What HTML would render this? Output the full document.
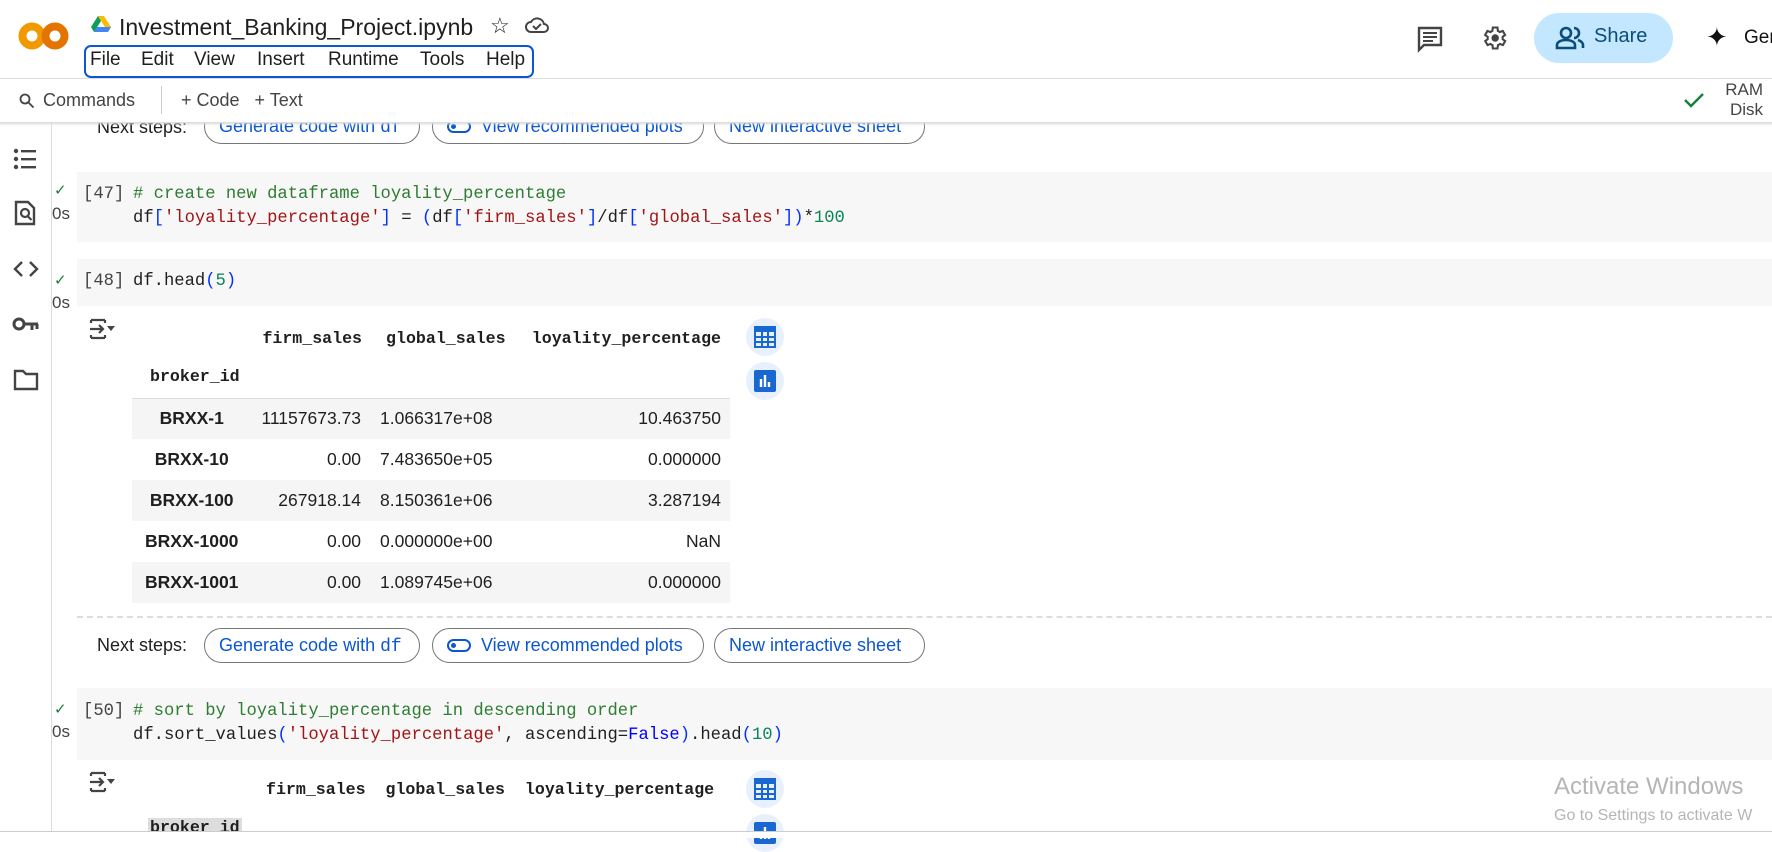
<!DOCTYPE html>
<html><head><meta charset="utf-8">
<style>
*{margin:0;padding:0;box-sizing:border-box}
body{width:1772px;height:838px;overflow:hidden;background:#fff;font-family:"Liberation Sans",sans-serif;position:relative;color:#1f1f1f}
.a{position:absolute;white-space:nowrap}
.mono{font-family:"Liberation Mono",monospace}
.cell{position:absolute;left:77px;right:0;background:#f7f7f7}
.code{font-family:"Liberation Mono",monospace;font-size:17.2px;color:#1f1f1f}
.cm{color:#2e7d32}.st{color:#a31515}.br{color:#0431fa}.nu{color:#098658}.kw{color:#0000ff}
.btn{position:absolute;height:35px;border:1px solid #747775;border-radius:18px;color:#0b57d0;font-size:18px;line-height:33px;padding:0 14px;white-space:nowrap}
th{font-family:"Liberation Mono",monospace;font-weight:bold;font-size:16.6px}
.tb td{font-size:17.5px;height:41px;text-align:right;padding-right:9px}
.tb td.h{font-weight:bold;text-align:center;padding:0 8px}
.ico{position:absolute;width:38px;height:38px;border-radius:50%;background:#e8f0fe}
.mi{position:absolute;top:49px;font-size:19px;color:#1f1f1f}
</style></head><body>

<!-- header -->
<svg class="a" style="left:18px;top:21px" width="52" height="30" viewBox="0 0 52 30">
<circle cx="14" cy="15" r="9.5" fill="none" stroke="#f29900" stroke-width="8"/>
<circle cx="37" cy="15" r="9.5" fill="none" stroke="#e37400" stroke-width="8"/>
</svg>
<svg class="a" style="left:91px;top:16px" width="20" height="17" viewBox="0 0 20 17">
<polygon points="7,0 13,0 20,11 17,16" fill="#fbbc04"/><polygon points="7,0 0,11 3,16 10,5" fill="#0f9d58"/><polygon points="3,16 17,16 20,11 6,11" fill="#4285f4"/>
</svg>
<div class="a" style="left:119px;top:14px;font-size:23px;color:#1f1f1f">Investment_Banking_Project.ipynb</div>
<div class="a" style="left:490px;top:13px;font-size:22px">☆</div>
<svg class="a" style="left:525px;top:15px" width="24" height="20" viewBox="0 0 24 20"><path d="M6 17h13a4 4 0 0 0 0-8 7 7 0 0 0-13-2 5 5 0 0 0 0 10z" fill="none" stroke="#444" stroke-width="2"/><path d="M8 11l3 3 5-5" fill="none" stroke="#444" stroke-width="2"/></svg>
<div class="a" style="left:84px;top:45px;width:450px;height:33px;border:2px solid #0b57d0;border-radius:7px"></div>
<div class="mi" style="left:90px">File</div>
<div class="mi" style="left:141px">Edit</div>
<div class="mi" style="left:194px">View</div>
<div class="mi" style="left:257px">Insert</div>
<div class="mi" style="left:328px">Runtime</div>
<div class="mi" style="left:420px">Tools</div>
<div class="mi" style="left:486px">Help</div>

<svg class="a" style="left:1416px;top:25px" width="28" height="28" viewBox="0 0 28 28"><path d="M3 3h22v17H8l-5 5z" fill="none" stroke="#444" stroke-width="2.4"/><path d="M7 8h14M7 12h14M7 16h10" stroke="#444" stroke-width="2"/></svg>
<svg class="a" style="left:1480px;top:24px" width="28" height="28" viewBox="0 0 24 24"><path fill="none" stroke="#444" stroke-width="1.8" d="M19.4 13a7 7 0 0 0 0-2l2.1-1.6-2-3.5-2.5 1a7 7 0 0 0-1.7-1L15 3h-4l-.4 2.9a7 7 0 0 0-1.7 1l-2.5-1-2 3.5L6.6 11a7 7 0 0 0 0 2l-2.1 1.6 2 3.5 2.5-1a7 7 0 0 0 1.7 1L11 21h4l.4-2.9a7 7 0 0 0 1.7-1l2.5 1 2-3.5z"/><circle cx="13" cy="12" r="3.2" fill="#444"/></svg>
<div class="a" style="left:1534px;top:13px;width:139px;height:50px;border-radius:25px;background:#c2e7ff"></div>
<svg class="a" style="left:1555px;top:25px" width="30" height="26" viewBox="0 0 30 26"><circle cx="11" cy="8" r="5" fill="none" stroke="#0b4c7a" stroke-width="2.6"/><path d="M2 23v-3c0-3 4-5 9-5s9 2 9 5v3z" fill="none" stroke="#0b4c7a" stroke-width="2.6"/><path d="M19 3a5 5 0 0 1 0 10M23 15c3 1 5 3 5 5v3" fill="none" stroke="#0b4c7a" stroke-width="2.6"/></svg>
<div class="a" style="left:1594px;top:25px;font-size:20px;color:#0b4c7a">Share</div>
<div class="a" style="left:1706px;top:22px;font-size:26px;color:#111">✦</div>
<div class="a" style="left:1744px;top:27px;font-size:19px;color:#111">Gem</div>

<div class="a" style="left:0;top:78px;width:1772px;height:1px;background:#dadce0"></div>

<div class="a" style="left:51px;top:123px;width:1px;height:715px;background:#dadce0"></div>

<!-- sidebar icons -->
<svg class="a" style="left:13px;top:148px" width="24" height="22" viewBox="0 0 24 22"><g fill="#444"><circle cx="3" cy="3" r="2.2"/><circle cx="3" cy="11" r="2.2"/><circle cx="3" cy="19" r="2.2"/><rect x="8" y="2" width="15" height="2.4"/><rect x="8" y="10" width="15" height="2.4"/><rect x="8" y="18" width="15" height="2.4"/></g></svg>
<svg class="a" style="left:14px;top:200px" width="22" height="26" viewBox="0 0 22 26"><path d="M2 2h12l6 6v16H2z" fill="none" stroke="#444" stroke-width="2.4"/><circle cx="11" cy="13" r="4" fill="none" stroke="#444" stroke-width="2.2"/><path d="M13.5 16l4 4" stroke="#444" stroke-width="2.2"/></svg>
<svg class="a" style="left:13px;top:260px" width="26" height="18" viewBox="0 0 26 18"><path d="M9 2L2 9l7 7M17 2l7 7-7 7" fill="none" stroke="#444" stroke-width="2.4"/></svg>
<svg class="a" style="left:12px;top:315px" width="28" height="18" viewBox="0 0 28 18"><circle cx="7" cy="9" r="5" fill="none" stroke="#444" stroke-width="3"/><path d="M12 9h14M20 9v6M25 9v5" stroke="#444" stroke-width="3"/></svg>
<svg class="a" style="left:13px;top:369px" width="26" height="22" viewBox="0 0 26 22"><path d="M2 2h8l3 3h11v15H2z" fill="none" stroke="#444" stroke-width="2.4"/></svg>

<!-- first next steps (partially hidden) -->
<div class="a" style="left:97px;top:117px;font-size:18px">Next steps:</div>
<div class="btn" style="left:204px;top:109px;width:216px">Generate code with <span class="mono">df</span></div>
<div class="btn" style="left:432px;top:109px;width:272px"><span style="display:inline-block;width:24px;height:13px;border:2.5px solid #0b57d0;border-radius:7px;vertical-align:-1px;margin-right:10px;position:relative"><span style="position:absolute;left:2px;top:2px;width:5px;height:5px;background:#0b57d0;border-radius:50%"></span></span>View recommended plots</div>
<div class="btn" style="left:714px;top:109px;width:211px">New interactive sheet</div>
<!-- toolbar overlay -->
<div class="a" style="left:0;top:79px;width:1772px;height:44px;background:#fff"></div>
<svg class="a" style="left:19px;top:93px" width="16" height="16" viewBox="0 0 16 16"><circle cx="6" cy="6" r="4.5" fill="none" stroke="#444" stroke-width="1.8"/><path d="M9.5 9.5l5 5" stroke="#444" stroke-width="1.8"/></svg>
<div class="a" style="left:43px;top:90px;font-size:18px;color:#444">Commands</div>
<div class="a" style="left:161px;top:86px;width:1px;height:28px;background:#ccc"></div>
<div class="a" style="left:181px;top:90px;font-size:18px;color:#444">+ Code&nbsp;&nbsp; + Text</div>
<svg class="a" style="left:1683px;top:91px" width="22" height="18" viewBox="0 0 22 18"><path d="M2 9l6 6L20 3" fill="none" stroke="#188038" stroke-width="2.4"/></svg>
<div class="a" style="left:1723px;top:80px;font-size:17px;color:#444;line-height:20px;text-align:right;width:40px">RAM<br>Disk</div>
<div class="a" style="left:0;top:122px;width:1772px;height:4px;background:linear-gradient(#d8d8d8,#fff0)"></div>

<!-- cell 47 -->
<div class="cell" style="top:172px;height:70px"></div>
<div class="a" style="left:54px;top:181px;color:#188038;font-size:15px">✓</div>
<div class="a" style="left:52px;top:204px;font-size:17px;color:#444">0s</div>
<div class="a code" style="left:83px;top:183px;line-height:24px;color:#444">[47]</div>
<div class="a code" style="left:133px;top:183px;line-height:24px"><span class="cm"># create new dataframe loyality_percentage</span><br>df<span class="br">[</span><span class="st">'loyality_percentage'</span><span class="br">]</span> = <span class="br">(</span>df<span class="br">[</span><span class="st">'firm_sales'</span><span class="br">]</span>/df<span class="br">[</span><span class="st">'global_sales'</span><span class="br">])</span>*<span class="nu">100</span></div>

<!-- cell 48 -->
<div class="cell" style="top:259px;height:47px"></div>
<div class="a" style="left:54px;top:271px;color:#188038;font-size:15px">✓</div>
<div class="a" style="left:52px;top:293px;font-size:17px;color:#444">0s</div>
<div class="a code" style="left:83px;top:270px;line-height:24px;color:#444">[48]</div>
<div class="a code" style="left:133px;top:270px;line-height:24px">df.head<span class="br">(</span><span class="nu">5</span><span class="br">)</span></div>

<svg class="a" style="left:89px;top:318px" width="28" height="22" viewBox="0 0 28 22"><path d="M2 2h14M2 20h14M2 2v3M2 17v3M16 2v3M16 17v3M1 11h13M10 7l4 4-4 4" fill="none" stroke="#444" stroke-width="2.2"/><path d="M18 8h8l-4 5z" fill="#444"/></svg>

<table class="a tb" style="left:132px;top:320px;border-collapse:collapse;width:598px">
<tr style="height:36px"><th></th><th style="text-align:right;padding-right:8px">firm_sales</th><th style="text-align:right;padding-right:8px">global_sales</th><th style="text-align:right;padding-right:9px">loyality_percentage</th></tr>
<tr style="height:42px;border-bottom:1px solid #ddd"><th style="text-align:left;padding-left:18px">broker_id</th><th></th><th></th><th></th></tr>
<tr style="background:#f5f5f5"><td class="h">BRXX-1</td><td>11157673.73</td><td style="text-align:left;padding-left:10px">1.066317e+08</td><td>10.463750</td></tr>
<tr><td class="h">BRXX-10</td><td>0.00</td><td style="text-align:left;padding-left:10px">7.483650e+05</td><td>0.000000</td></tr>
<tr style="background:#f5f5f5"><td class="h">BRXX-100</td><td>267918.14</td><td style="text-align:left;padding-left:10px">8.150361e+06</td><td>3.287194</td></tr>
<tr><td class="h">BRXX-1000</td><td>0.00</td><td style="text-align:left;padding-left:10px">0.000000e+00</td><td>NaN</td></tr>
<tr style="background:#f5f5f5"><td class="h">BRXX-1001</td><td>0.00</td><td style="text-align:left;padding-left:10px">1.089745e+06</td><td>0.000000</td></tr>
</table>

<div class="ico" style="left:746px;top:318px"></div>
<svg class="a" style="left:754px;top:326px" width="22" height="22" viewBox="0 0 22 22"><rect x="1" y="1" width="20" height="20" fill="none" stroke="#1967d2" stroke-width="2"/><rect x="1" y="1" width="20" height="5" fill="#1967d2"/><path d="M1 11h20M1 16h20M8 6v15M14 6v15" stroke="#1967d2" stroke-width="2"/></svg>
<div class="ico" style="left:746px;top:362px"></div>
<svg class="a" style="left:754px;top:370px" width="22" height="22" viewBox="0 0 22 22"><rect x="0" y="0" width="22" height="22" rx="2" fill="#1967d2"/><path d="M7 9v8M11 5v12M15 12v5" stroke="#fff" stroke-width="2.4"/></svg>

<div class="a" style="left:77px;top:616px;width:1695px;border-top:2px dashed #ddd"></div>

<div class="a" style="left:97px;top:635px;font-size:18px">Next steps:</div>
<div class="btn" style="left:204px;top:628px;width:216px">Generate code with <span class="mono">df</span></div>
<div class="btn" style="left:432px;top:628px;width:272px"><span style="display:inline-block;width:24px;height:13px;border:2.5px solid #0b57d0;border-radius:7px;vertical-align:-1px;margin-right:10px;position:relative"><span style="position:absolute;left:2px;top:2px;width:5px;height:5px;background:#0b57d0;border-radius:50%"></span></span>View recommended plots</div>
<div class="btn" style="left:714px;top:628px;width:211px">New interactive sheet</div>

<!-- cell 50 -->
<div class="cell" style="top:688px;height:72px"></div>
<div class="a" style="left:54px;top:700px;color:#188038;font-size:15px">✓</div>
<div class="a" style="left:52px;top:722px;font-size:17px;color:#444">0s</div>
<div class="a code" style="left:83px;top:700px;line-height:24px;color:#444">[50]</div>
<div class="a code" style="left:133px;top:700px;line-height:24px"><span class="cm"># sort by loyality_percentage in descending order</span><br>df.sort_values<span class="br">(</span><span class="st">'loyality_percentage'</span>, ascending=<span class="kw">False</span><span class="br">)</span>.head<span class="br">(</span><span class="nu">10</span><span class="br">)</span></div>

<svg class="a" style="left:89px;top:771px" width="28" height="22" viewBox="0 0 28 22"><path d="M2 2h14M2 20h14M2 2v3M2 17v3M16 2v3M16 17v3M1 11h13M10 7l4 4-4 4" fill="none" stroke="#444" stroke-width="2.2"/><path d="M18 8h8l-4 5z" fill="#444"/></svg>
<div class="a mono" style="left:266px;top:780px;font-size:16.6px;font-weight:bold">firm_sales&nbsp; global_sales&nbsp; loyality_percentage</div>
<div class="a mono" style="left:148px;top:818px;font-size:16.6px;font-weight:bold;background:#ddd;padding:0 2px">broker_id</div>
<div class="ico" style="left:746px;top:770px"></div>
<svg class="a" style="left:754px;top:778px" width="22" height="22" viewBox="0 0 22 22"><rect x="1" y="1" width="20" height="20" fill="none" stroke="#1967d2" stroke-width="2"/><rect x="1" y="1" width="20" height="5" fill="#1967d2"/><path d="M1 11h20M1 16h20M8 6v15M14 6v15" stroke="#1967d2" stroke-width="2"/></svg>
<div class="ico" style="left:746px;top:814px"></div>
<svg class="a" style="left:754px;top:822px" width="22" height="22" viewBox="0 0 22 22"><rect x="0" y="0" width="22" height="22" rx="2" fill="#1967d2"/><path d="M7 9v8M11 5v12M15 12v5" stroke="#fff" stroke-width="2.4"/></svg>

<div class="a" style="left:1554px;top:773px;font-size:24px;color:#b5b5b5">Activate Windows</div>
<div class="a" style="left:1554px;top:807px;font-size:16px;color:#b5b5b5">Go to Settings to activate W</div>
<div class="a" style="left:0;top:831px;width:1772px;height:7px;background:#fff;border-top:1px solid #ccc"></div>
</body></html>
